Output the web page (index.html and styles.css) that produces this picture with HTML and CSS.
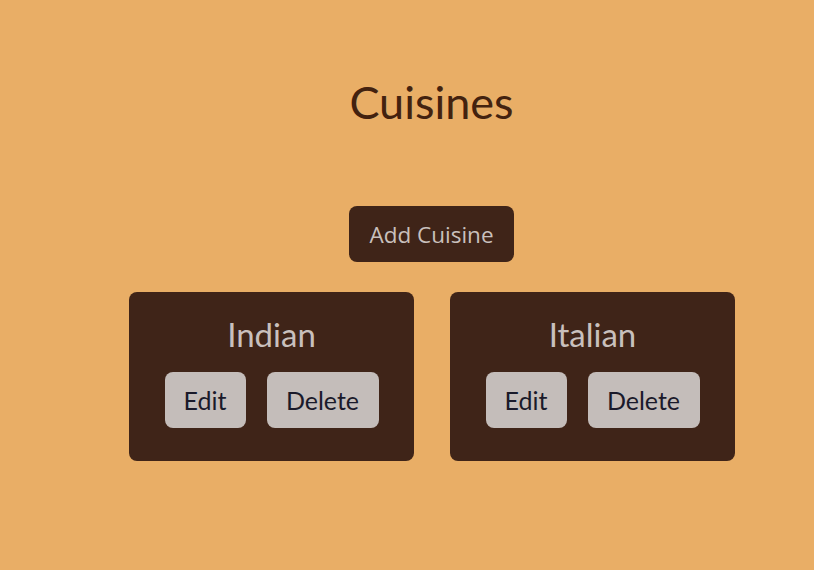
FILE: index.html
```html
<!DOCTYPE html>
<html>
<head>
<meta charset="utf-8">
<link rel="stylesheet" href="styles.css">
</head>
<body>
<main class="page">
  <h1 class="title">Cuisines</h1>
  <button class="add-btn">Add Cuisine</button>
  <div class="cards">
    <div class="card">
      <h2 class="card-title">Indian</h2>
      <div class="actions">
        <button class="btn edit">Edit</button>
        <button class="btn delete">Delete</button>
      </div>
    </div>
    <div class="card">
      <h2 class="card-title">Italian</h2>
      <div class="actions">
        <button class="btn edit">Edit</button>
        <button class="btn delete">Delete</button>
      </div>
    </div>
  </div>
</main>
</body>
</html>
```
FILE: styles.css
```css
html, body {
  margin: 0;
  padding: 0;
  background: #e9ae66;
  height: 100%;
}
body {
  font-family: "Lato", "Open Sans", sans-serif;
}
.page {
  display: flex;
  flex-direction: column;
  align-items: center;
  padding-left: 49px;
  padding-top: 76px;
}
.title {
  margin: 0;
  font-weight: 400;
  font-size: 45px;
  line-height: 52px;
  color: #43220f;
}
.add-btn {
  margin-top: 78px;
  width: 165px;
  height: 56px;
  border: none;
  border-radius: 8px;
  background: #3f2418;
  color: #c9c0bd;
  font-family: "Open Sans", sans-serif;
  font-size: 22.5px;
  padding: 0;
}
.cards {
  display: flex;
  gap: 36px;
  margin-top: 30px;
  padding-left: 1px;
}
.card {
  width: 285px;
  height: 169px;
  box-sizing: border-box;
  background: #3f2418;
  border-radius: 8px;
  display: flex;
  flex-direction: column;
  align-items: center;
  padding-top: 23px;
}
.card-title {
  margin: 0;
  font-weight: 400;
  font-size: 33px;
  line-height: 38px;
  color: #c9c0bd;
}
.actions {
  display: flex;
  gap: 21px;
  margin-top: 19px;
}
.btn {
  height: 56px;
  border: none;
  border-radius: 8px;
  background: #c4bdba;
  color: #1a1a2a;
  font-family: "Lato", sans-serif;
  font-size: 25px;
  padding: 0;
}
.edit { width: 81px; }
.delete { width: 112px; }
```
